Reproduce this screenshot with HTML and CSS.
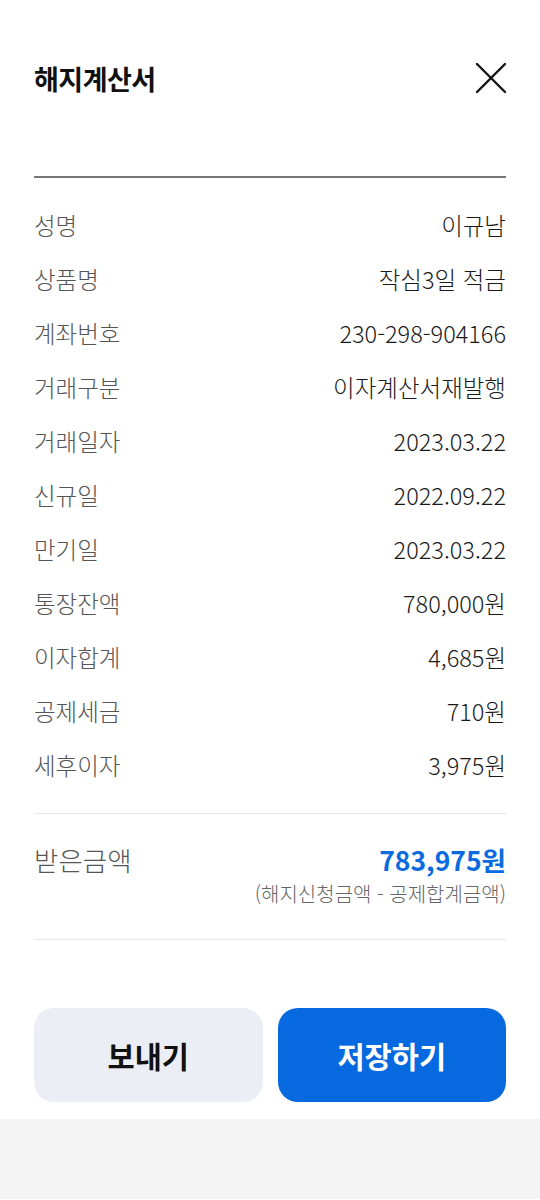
FILE: index.html
```html
<!DOCTYPE html>
<html lang="ko">
<head>
	<meta charset="UTF-8">
	<meta name="viewport" content="width=device-width, initial-scale=1.0">
	<title>해지계산서</title>
	<link rel="stylesheet" href="styles.css">
</head>
<body>
	<div class="sheet">
		<header class="sheet-head">
			<h1>해지계산서</h1>
			<button class="close" aria-label="닫기">
				<svg width="32" height="32" viewBox="0 0 32 32">
					<path d="M2 2 L30 30 M30 2 L2 30" stroke="#111" stroke-width="2.4" stroke-linecap="round" fill="none"/>
				</svg>
			</button>
		</header>

		<dl class="details">
			<div class="row"><dt>성명</dt><dd>이규남</dd></div>
			<div class="row"><dt>상품명</dt><dd>작심3일 적금</dd></div>
			<div class="row"><dt>계좌번호</dt><dd>230-298-904166</dd></div>
			<div class="row"><dt>거래구분</dt><dd>이자계산서재발행</dd></div>
			<div class="row"><dt>거래일자</dt><dd>2023.03.22</dd></div>
			<div class="row"><dt>신규일</dt><dd>2022.09.22</dd></div>
			<div class="row"><dt>만기일</dt><dd>2023.03.22</dd></div>
			<div class="row"><dt>통장잔액</dt><dd>780,000원</dd></div>
			<div class="row"><dt>이자합계</dt><dd>4,685원</dd></div>
			<div class="row"><dt>공제세금</dt><dd>710원</dd></div>
			<div class="row"><dt>세후이자</dt><dd>3,975원</dd></div>
		</dl>

		<div class="total">
			<span class="total-label">받은금액</span>
			<div class="total-value">
				<strong>783,975원</strong>
				<span>(해지신청금액 - 공제합계금액)</span>
			</div>
		</div>

		<div class="actions">
			<button class="btn btn-light">보내기</button>
			<button class="btn btn-primary">저장하기</button>
		</div>
	</div>
	<div class="bottom-bar"></div>
</body>
</html>
```

FILE: styles.css
```css
* {
	box-sizing: border-box;
}
body {
	margin: 0;
	background: #fff;
	font-family: "Noto Sans CJK KR", "Noto Sans", sans-serif;
	color: #1a1a1a;
}
.sheet {
	padding: 0 34px 17px;
}
.sheet-head {
	display: flex;
	align-items: center;
	justify-content: space-between;
	height: 178px;
	padding-bottom: 20px;
	border-bottom: 2px solid #777;
}
.sheet-head h1 {
	margin: 0;
	font-size: 27px;
	font-weight: bold;
	color: #111;
	letter-spacing: -0.5px;
}
.close {
	border: 0;
	background: none;
	padding: 0;
	margin-right: -1px;
	display: flex;
}
.details {
	margin: 0;
	padding: 20px 0 21px;
	border-bottom: 1px solid #e6e6e6;
}
.row {
	display: flex;
	justify-content: space-between;
	align-items: center;
	height: 54px;
	font-size: 23.5px;
	font-weight: 300;
}
.row dt {
	color: #555;
}
.row dd {
	margin: 0;
	color: #1a1a1a;
}
.total {
	display: flex;
	justify-content: space-between;
	align-items: flex-start;
	padding: 29px 0 31px;
	border-bottom: 1px solid #e6e6e6;
}
.total-label {
	font-size: 26.5px;
	font-weight: 300;
	line-height: 34px;
	color: #555;
}
.total-value {
	display: flex;
	flex-direction: column;
	align-items: flex-end;
}
.total-value strong {
	font-size: 26.5px;
	font-weight: bold;
	color: #0a6be0;
	line-height: 34px;
}
.total-value span {
	font-size: 20px;
	font-weight: 300;
	line-height: 28px;
	color: #666;
	margin-top: 3px;
}
.actions {
	display: flex;
	gap: 15px;
	margin-top: 68px;
}
.btn {
	flex: 1;
	height: 94px;
	border: 0;
	border-radius: 20px;
	font-family: inherit;
	font-size: 29.5px;
	font-weight: bold;
}
.btn-light {
	background: #ebeef4;
	color: #111;
}
.btn-primary {
	background: #0769df;
	color: #fff;
}
.bottom-bar {
	height: 80px;
	background: #f4f4f5;
}
```
